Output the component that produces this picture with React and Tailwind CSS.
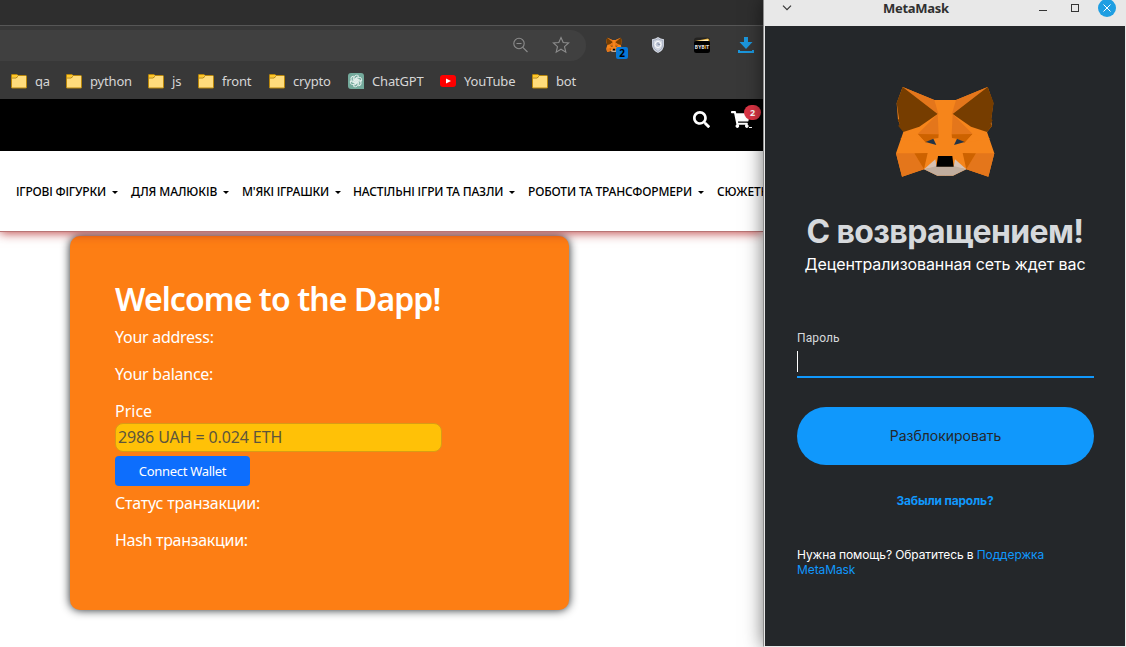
import React from "react";

function Fox({ className, simple }) {
  const half = (
    <>
      <polygon fill="#e4761b" points="68,51 163,90 176,134" />
      <polygon fill="#763d00" points="68,51 173,132 118,170 70,186 55,168 59,160 53,151 57,146 50,98" />
      <polygon fill="#e4761b" points="173,132 176,193 113,192" />
      <polygon fill="#cd6200" points="113,192 176,193 175,204 160,206 137,218" />
      <polygon fill="#f6851b" points="113,192 137,218 60,206" />
      <polygon fill="#233447" points="137,216 160,206 169,225" />
      <polygon fill="#e4761b" points="48,250 103,250 132,298 66,320" />
      <polygon fill="#cd6200" points="103,250 143,249 132,298" />
      <polygon fill="#d7c1b3" points="132,298 166,268 170,291" />
      <polygon fill="#c0ad9e" points="132,298 168,289 196,289 196,317 172,317" />
    </>
  );
  return (
    <svg viewBox={simple ? "44 48 302 276" : "0 0 390 360"} className={className} aria-hidden="true">
      <polygon
        fill="#f6851b"
        points="68,51 163,90 228,90 323,51 340,100 333,150 336,168 321,186 343,250 325,320 259,298 219,317 172,317 132,298 66,320 48,250 70,186 54,150 50,100"
      />
      {half}
      <g transform="translate(391 0) scale(-1 1)">{half}</g>
      <polygon fill="#000" points="174,258 217,258 221,290 169,290" />
    </svg>
  );
}

function Folder() {
  return (
    <svg viewBox="0 0 16 15" className="h-[15px] w-4 shrink-0" aria-hidden="true">
      <path d="M0.500 1Q0.500 .5 1 .5H6L7 1.500H14.500Q15.500 1.500 15.500 2.500V13.500Q15.500 14 15 14H1Q.5 14 .5 13.500Z" fill="#ffdc7c" stroke="#b8860b" />
      <path d="M1 1H6L6.500 2L5 3.300H1Z" fill="#ffc828" />
      <path d="M1 4H5L7 2.300" fill="none" stroke="#b8860b" />
    </svg>
  );
}

function Gpt() {
  return (
    <svg viewBox="0 0 16 16" className="size-4 shrink-0" fill="none" stroke="#e9f3f0" strokeWidth="0.9" aria-hidden="true">
      <path d="M3 0H13Q16 0 16 3V16H3Q0 16 0 13V3Q0 0 3 0Z" fill="#74aa9c" stroke="none" />
      {[0, 60, 120, 180, 240, 300].map((a) => (
        <path key={a} d="M6.200 8.900V4.600Q6.400 2.200 8.600 2.200Q10 2.200 10.800 3.200L7.600 5.100V8" transform={"rotate(" + a + " 8 8)"} />
      ))}
    </svg>
  );
}

function YouTube() {
  return (
    <svg viewBox="0 0 16 12" className="h-3 w-4 shrink-0" aria-hidden="true">
      <rect width="16" height="12" rx="3" fill="#f00" />
      <path d="M6 3.400V8.600L11 6Z" fill="#fff" />
    </svg>
  );
}

const bookmarks = [
  { icon: <Folder />, label: "qa", width: "w-[55px]" },
  { icon: <Folder />, label: "python", width: "w-[82px]" },
  { icon: <Folder />, label: "js", width: "w-[50px]" },
  { icon: <Folder />, label: "front", width: "w-[71px]" },
  { icon: <Folder />, label: "crypto", width: "w-[79px]" },
  { icon: <Gpt />, label: "ChatGPT", width: "w-[92px]" },
  { icon: <YouTube />, label: "YouTube", width: "w-[92px]" },
  { icon: <Folder />, label: "bot", width: "w-[60px]" },
];

const menu = [
  { label: "ІГРОВІ ФІГУРКИ", width: "w-[115px]", tracking: "tracking-[-0.19px]" },
  { label: "ДЛЯ МАЛЮКІВ", width: "w-[111px]", tracking: "tracking-[-0.1px]" },
  { label: "М'ЯКІ ІГРАШКИ", width: "w-[111px]", tracking: "tracking-[-0.23px]" },
  { label: "НАСТІЛЬНІ ІГРИ ТА ПАЗЛИ", width: "w-[175px]", tracking: "tracking-[-0.16px]" },
  { label: "РОБОТИ ТА ТРАНСФОРМЕРИ", width: "w-[189px]", tracking: "tracking-[-0.15px]" },
  { label: "СЮЖЕТНІ ІГРИ", width: "w-[115px]", tracking: "tracking-[-0.1px]" },
];

function Toolbar() {
  return (
    <div className="h-[74px] shrink-0 border-t border-[#565656] bg-[#383838]">
      <div className="flex h-[39px] items-center">
        <div className="flex h-[31px] w-[586px] items-center justify-end gap-6 rounded-r-full bg-[#404040] pr-4 pb-px text-[#8c8c8c]">
          <svg viewBox="0 0 16 16" className="size-4" fill="none" stroke="currentColor" strokeWidth="1.1" aria-hidden="true">
            <circle cx="7" cy="6.500" r="5.200" />
            <path d="M4.500 6.500H9.500M10.800 10.300L15.500 15" />
          </svg>
          <svg viewBox="0 0 18 18" className="size-[18px]" fill="none" stroke="currentColor" strokeWidth="1.1" aria-hidden="true">
            <path d="M9 1.500L11.200 6.500L16.600 7L12.500 10.600L13.800 16.200L9 13.200L4.200 16.200L5.500 10.600L1.400 7L6.800 6.500Z" />
          </svg>
        </div>
        <div className="relative mb-px ml-5 size-4">
          <Fox simple className="size-4" />
          <span className="absolute top-[10px] left-[10px] flex h-3 w-3 items-center justify-center rounded-[2px] bg-[#0578d8] text-[10px] font-bold text-black">2</span>
        </div>
        <svg viewBox="0 0 14 16" className="mb-px ml-[29px] h-4 w-[14px]" aria-hidden="true">
          <path d="M7 0Q9.500 2 13 2.200V8Q13 13 7 16Q1 13 1 8V2.200Q4.500 2 7 0Z" fill="#d3d8e2" />
          <path d="M7 1.800Q9 3 11.800 3.400V8Q11.800 12 7 14.500Q2.200 12 2.200 8V3.400Q5 3 7 1.800Z" fill="none" stroke="#939cb2" strokeWidth="0.7" />
          <circle cx="7" cy="7.500" r="3" fill="#c2c9d8" stroke="#fff" />
          <path d="M7 5.500V7.500H9" fill="none" stroke="#8b95aa" />
        </svg>
        <svg viewBox="0 0 16 16" className="mb-px ml-[29px] size-4" aria-hidden="true">
          <rect y="0.500" width="16" height="14" rx="3" fill="#242321" />
          <path d="M1 4L14 1.500Q15.500 2 15.500 4Z" fill="#e8b23c" />
          <path d="M3 4L14 2.500V4Z" fill="#fff0c8" />
          <rect y="4" width="16" height="12" rx="2.500" fill="#000" />
          <text x="8" y="11.800" textAnchor="middle" fontSize="4.800" fontWeight="800" fontFamily="Inter" fill="#ddd">
            BYB<tspan fill="#f7a600">I</tspan>T
          </text>
        </svg>
        <svg viewBox="0 0 16 16" className="mb-px ml-7 size-4" fill="#1b96dc" aria-hidden="true">
          <path d="M6 0H10V5H14.500L8 12L1.500 5H6Z" />
          <path d="M0 13H2V14H14V13H16V16H0Z" />
        </svg>
      </div>
      <div className="flex h-[32px] items-center pl-[11px] text-[13px] text-[#d6d6d6]">
        {bookmarks.map((b) => (
          <div key={b.label} className={"flex shrink-0 items-center gap-2 " + b.width}>
            {b.icon}
            <span className="pt-[2px] tracking-[-0.17px]">{b.label}</span>
          </div>
        ))}
      </div>
    </div>
  );
}

function Dapp() {
  return (
    <div className="ml-[70px] mt-1 h-[374px] w-[499px] shrink-0 rounded-[10px] bg-[#fd7e14] px-[45px] pt-[44px] text-white shadow-[0_0_10px_#212529]">
      <h1 className="h-[39px] text-[32px] leading-[38px] font-[570] tracking-[-0.92px]">Welcome to the Dapp!</h1>
      <div className="flex flex-col pt-[6px] text-base leading-6">
        <p className="mb-[13px] tracking-[-0.27px]">Your address:</p>
        <p className="mb-[13px] tracking-[-0.25px]">Your balance:</p>
        <p className="h-6">Price</p>
      </div>
      <div className="flex h-[29px] w-[327px] items-center rounded-[8px] border border-[#d99c14] bg-[#ffc107] pb-[2px] pl-[2px] text-base tracking-[-0.12px] text-[#5d553c]">
        2986 UAH = 0.024 ETH
      </div>
      <button className="mt-1 flex h-[30px] w-[135px] items-center justify-center rounded-[4px] bg-[#0d6efd] pt-[2px] text-[13px] tracking-[-0.3px]">Connect Wallet</button>
      <div className="pt-[5px] text-base leading-6">
        <p className="mb-[13px] tracking-[-0.2px]">Статус транзакции:</p>
        <p className="tracking-[-0.3px]">Hash транзакции:</p>
      </div>
    </div>
  );
}

function Browser() {
  return (
    <div className="flex w-[763px] shrink-0 flex-col overflow-hidden bg-white">
      <div className="h-[25px] shrink-0 bg-[#2e2e2e]" />
      <Toolbar />
      <div className="relative z-10 flex h-[52px] shrink-0 items-start bg-black pt-[12px] pl-[693px] text-white">
        <svg viewBox="0 0 512 512" className="size-[17px] shrink-0" fill="currentColor" aria-hidden="true">
          <path d="M505 442.700L405.300 343c-4.500-4.500-10.600-7-17-7H372c27.600-35.300 44-79.700 44-128C416 93.100 322.900 0 208 0S0 93.100 0 208s93.100 208 208 208c48.300 0 92.700-16.400 128-44v16.300c0 6.400 2.500 12.500 7 17l99.700 99.700c9.400 9.400 24.600 9.400 33.900 0l28.300-28.300c9.400-9.400 9.400-24.600.1-34zM208 336c-70.700 0-128-57.200-128-128 0-70.700 57.200-128 128-128 70.700 0 128 57.200 128 128 0 70.700-57.200 128-128 128z" />
        </svg>
        <div className="relative ml-[21px] h-[18px] w-[20px] shrink-0">
          <svg viewBox="0 0 576 512" className="h-[17px] w-[19px]" fill="currentColor" aria-hidden="true">
            <path d="M528.100 301.300l47.300-208C578.800 78.300 567.400 64 552 64H159.200l-9.200-44.800C147.800 8 137.900 0 126.500 0H24C10.700 0 0 10.700 0 24v16c0 13.300 10.700 24 24 24h69.900l70.200 343.400C147.300 417.100 136 435.200 136 456c0 30.900 25.100 56 56 56s56-25.100 56-56c0-15.700-6.400-29.800-16.800-40h209.600C430.400 426.200 424 440.300 424 456c0 30.900 25.100 56 56 56s56-25.100 56-56c0-22.200-12.900-41.300-31.600-50.400l5.500-24.300c3.400-15-8-29.300-23.400-29.300H218.100l-6.500-32h293.100c11.200 0 20.900-7.800 23.400-18.700z" />
          </svg>
          <span className="absolute top-[-6px] left-[13px] flex h-[15px] w-[17px] items-center justify-center rounded-full bg-[#dc3545] text-[9px] font-bold">2</span>
          <span className="absolute top-[16px] left-[18px] h-px w-[3px] bg-white" />
        </div>
      </div>
      <nav className="relative flex h-[81px] shrink-0 items-center border-b border-[#b97474] bg-white pt-[2px] pl-4 text-[12px] font-[540] text-black shadow-[0_1px_10px_rgba(176,32,32,0.85)]">
        {menu.map((m) => (
          <div key={m.label} className={"flex shrink-0 items-center gap-[6px] whitespace-nowrap " + m.width}>
            <span className={m.tracking}>{m.label}</span>
            <span className="border-x-[3px] border-t-[3px] border-x-transparent border-t-black" />
          </div>
        ))}
      </nav>
      <Dapp />
    </div>
  );
}

function Wallet() {
  return (
    <div className="relative z-10 flex w-[363px] flex-col border-r border-b border-l border-[#e8e8e8] border-l-[#8e8e8e] bg-[#24272a] shadow-[0_0_18px_rgba(0,0,0,0.55)]">
      <div className="flex h-[26px] shrink-0 bg-[#e8e8e8] text-[#353535]">
        <svg viewBox="0 0 10 6" className="mt-[5px] ml-[18px] h-[6px] w-[10px]" fill="none" stroke="currentColor" strokeWidth="1.200" aria-hidden="true">
          <path d="M1 .7L5 4.700L9 .7" />
        </svg>
        <span className="mt-[-2px] ml-[91px] w-[156px] text-[13px] leading-5 font-bold tracking-[-0.3px] text-[#303030]">MetaMask</span>
        <span className="mt-[10px] h-px w-2 bg-[#353535]" />
        <span className="mt-1 ml-6 size-2 border border-[#353535]" />
        <span className="mt-[-1px] ml-[19px] flex size-[18px] items-center justify-center rounded-full bg-[#1e9ee2]">
          <svg viewBox="0 0 8 8" className="size-2" stroke="#fff" aria-hidden="true">
            <path d="M.5 .5L7.500 7.500M7.500 .5L.5 7.500" />
          </svg>
        </span>
      </div>
      <div className="flex grow flex-col border-l border-[#e8e8e8] px-8 font-['Inter','Liberation_Sans',sans-serif]">
        <Fox className="mt-[44px] h-[120px] w-[130px] shrink-0 self-center" />
        <h2 className="mt-[22px] h-10 text-center text-[32px] leading-10 font-bold tracking-[-0.62px] whitespace-nowrap text-[#d6d9dc]">С возвращением!</h2>
        <p className="mx-[-10px] h-6 text-center text-base leading-6 tracking-[-0.09px] whitespace-nowrap text-white">Децентрализованная сеть ждет вас</p>
        <label className="mt-[54px] h-4 font-['Roboto'] text-[12px] leading-[17px] tracking-[0.1px] text-[#d6d9dc]">Пароль</label>
        <div className="mt-[5px] h-[27px] w-[297px] border-b-2 border-[#1098fc]">
          <div className="h-[21px] w-px bg-white" />
        </div>
        <button className="mt-[29px] flex h-[58px] w-[297px] shrink-0 items-center justify-center rounded-full bg-[#1098fc] pb-[2px] text-[14px] text-[#24272a]">Разблокировать</button>
        <a className="mt-[28px] h-4 text-center text-[12px] leading-4 font-bold tracking-[-0.18px] text-[#1098fc]">Забыли пароль?</a>
        <p className="mt-[38px] text-[12px] leading-[15px] tracking-[-0.1px] text-white">
          Нужна помощь? Обратитесь в <span className="text-[#1098fc]">Поддержка<br />MetaMask</span>
        </p>
      </div>
    </div>
  );
}

export default function App() {
  return (
    <main className="flex h-[647px] w-[1126px] overflow-hidden font-['Noto_Sans','Open_Sans',sans-serif]">
      <Browser />
      <Wallet />
    </main>
  );
}
